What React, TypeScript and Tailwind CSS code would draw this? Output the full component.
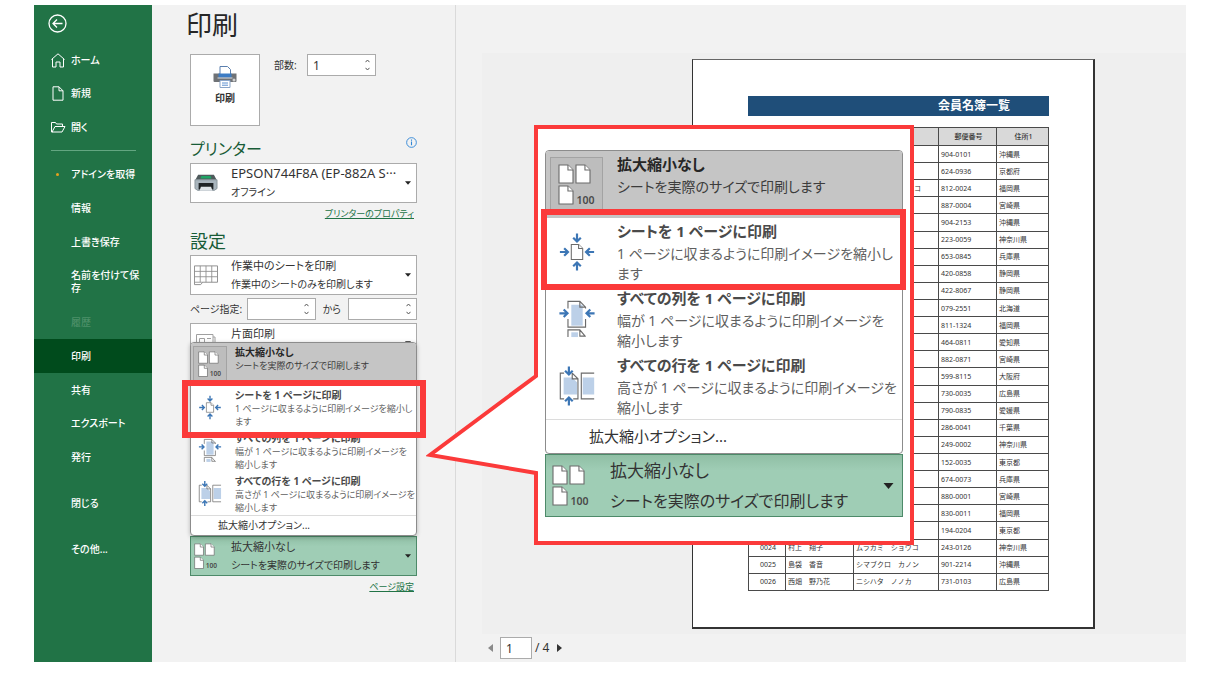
import type { ReactNode } from "react";

type Size = "sm" | "lg";

const RED = "#fb3a3a";

/* ---------- icons ---------- */

function Sheet({ x, y, w = 14, h = 18 }: { x: number; y: number; w?: number; h?: number }) {
  const f = w * 0.36;
  return (
    <g fill="#fff" stroke="#6b6b6b" strokeWidth="1.1">
      <path d={`M${x} ${y}h${w - f}l${f} ${f}v${h - f}h${-w}z`} />
      <path d={`M${x + w - f} ${y}v${f}h${f}`} />
    </g>
  );
}

function ArrowMark({ x, y, rotate = 0 }: { x: number; y: number; rotate?: number }) {
  return (
    <path
      d="M-5 0H3.500M-0.500 -4L3.500 0L-0.500 4"
      transform={`translate(${x} ${y}) rotate(${rotate})`}
      fill="none"
      stroke="#3c76b5"
      strokeWidth="2.3"
    />
  );
}

function NoScaleIcon({ className }: { className: string }) {
  return (
    <svg viewBox="0 0 38 42" className={className} aria-hidden="true">
      <Sheet x={1} y={1} />
      <Sheet x={18} y={1} />
      <Sheet x={1} y={22} />
      <text x="18.5" y="40" fontSize="10.5" fontWeight="600" fontFamily="Noto Sans, sans-serif" fill="#4a4a4a">
        100
      </text>
    </svg>
  );
}

function FitPageIcon({ className }: { className: string }) {
  return (
    <svg viewBox="-1 -1 40 42" className={className} aria-hidden="true">
      <Sheet x={13} y={12} w={12} h={16} />
      <ArrowMark x={6} y={20} />
      <ArrowMark x={32} y={20} rotate={180} />
      <ArrowMark x={19} y={5.5} rotate={90} />
      <ArrowMark x={19} y={34.5} rotate={-90} />
    </svg>
  );
}

function FitColumnsIcon({ className }: { className: string }) {
  return (
    <svg viewBox="0 -1 40 42" className={className} aria-hidden="true">
      <rect x="14" y="5" width="12" height="22" fill="#bcd0e8" />
      <path d="M10.500 9V1.500H23l6 6V9M10.500 20v8.500H29V20M23 1.500v6h6" fill="none" stroke="#6b6b6b" strokeWidth="1.200" />
      <path d="M14 34h7v5h-7z" fill="#bcd0e8" />
      <path d="M10.500 39v-7.500H23l6 7M23 31.500V38h6" fill="none" stroke="#6b6b6b" strokeWidth="1.200" />
      <ArrowMark x={6.5} y={14} />
      <ArrowMark x={33.500} y={14} rotate={180} />
    </svg>
  );
}

function FitRowsIcon({ className }: { className: string }) {
  return (
    <svg viewBox="0 0 38 44" className={className} aria-hidden="true">
      <path d="M5 13h9l5 5v13H5zM25 13h12v18H25z" fill="#bcd0e8" />
      <path d="M5.500 8.500H1.500v27h4M14 8.500l6 6v21h-5M14 8.500v6h6M37 8.500H23.500v27H37" fill="none" stroke="#6b6b6b" strokeWidth="1.200" />
      <ArrowMark x={10.500} y={6.500} rotate={90} />
      <ArrowMark x={10.500} y={37.500} rotate={-90} />
    </svg>
  );
}

function PrintIcon() {
  return (
    <svg viewBox="0 0 24 22" className="h-[22px] w-6" aria-hidden="true">
      <path d="M0.500 7.500h23v7.500a1 1 0 0 1-1 1h-21a1 1 0 0 1-1-1z" fill="#6f7276" />
      <path d="M7 0.500h7.500l3 3V10H7z" fill="#fff" stroke="#5a7fae" />
      <path d="M5.500 7.500h13v4h-13z" fill="#3d7cc4" />
      <path d="M4.500 11.500h15v1h-15z" fill="#d9dde2" />
      <circle cx="21" cy="14" r="1.500" fill="#d0d0d0" />
      <path d="M7 14.500h10v7H7z" fill="#fff" stroke="#8aa5c8" />
      <path d="M9 17h6M9 19.200h6" stroke="#5b8fd0" />
    </svg>
  );
}

function PrinterDeviceIcon() {
  return (
    <svg viewBox="0 0 26 20" className="h-5 w-6" aria-hidden="true">
      <path d="M4.500 1h17l3 5.500H1.500z" fill="#4f5a5c" />
      <path d="M8 2.500h10l1 2.500H7z" fill="#1fa565" />
      <path d="M1 6.500h24V16l-3 2H4l-3-2z" fill="#a9b5bd" stroke="#7d8990" strokeWidth="0.800" />
      <path d="M5 10h16v7H5z" fill="#1f2426" />
      <path d="M7.500 14h11l1.500 4.500H6z" fill="#dfe5e8" />
    </svg>
  );
}

function GridIcon() {
  return (
    <svg viewBox="0 0 25 21" className="h-[21px] w-6" aria-hidden="true" fill="none" stroke="#8d8d8d">
      <path d="M0.500 0.500h24v17H9l-2 2.500H0.500z" fill="#fff" />
      <path d="M0.500 6.200h24M0.500 11.800h24M6.500 0.500v17M12.500 0.500v17M18.500 0.500v17M0.500 17.500H9" strokeWidth="0.900" />
    </svg>
  );
}

function OneSideIcon() {
  return (
    <svg viewBox="0 0 22 22" className="h-[22px] w-[22px]" aria-hidden="true" fill="none" stroke="#a0a0a0">
      <path d="M2.500 20V2.500h16.500V20M19 5h2V20" />
      <path d="M5.500 6.500h5v4h-5zM13 6.500h4M13 10.500h4M5.500 14h11.500" />
    </svg>
  );
}

/* ---------- small building blocks ---------- */

function Spinner({ label, value = "", width }: { label: string; value?: string; width: string }) {
  return (
    <span className={`flex h-[22px] items-center border border-[#ababab] bg-white ${width}`}>
      <input aria-label={label} defaultValue={value} className="min-w-0 flex-1 bg-transparent pl-[5px] text-xs leading-none text-[#333] outline-none" />
      <span className="flex h-full w-4 flex-col items-center justify-between py-1">
        <button type="button" aria-label={`${label} +`} className="flex">
          <svg viewBox="0 0 5 4" className="h-1 w-[5px]" fill="none" stroke="#555"><path d="M0.500 3.200L2.500 1L4.500 3.200" /></svg>
        </button>
        <button type="button" aria-label={`${label} -`} className="flex">
          <svg viewBox="0 0 5 4" className="h-1 w-[5px]" fill="none" stroke="#555"><path d="M0.500 0.800L2.500 3L4.500 0.800" /></svg>
        </button>
      </span>
    </span>
  );
}

function DropBox({ label, title, detail, icon, size = "sm", active = false, titleSize = "text-[11px]" }: {
  label: string; title: string; detail: string; icon: ReactNode; size?: Size; active?: boolean; titleSize?: string;
}) {
  const lg = size === "lg";
  const tone = active
    ? "border-[#4d8a69] bg-linear-to-b from-[#90bfa5] to-[#9fcdb5] to-25%"
    : "border-[#ababab] bg-white";
  return (
    <div className={`flex items-center overflow-hidden border text-[#333] ${tone} ${lg ? "h-[63px]" : "h-10"}`}>
      <span className={lg ? "flex w-16 shrink-0 pl-1.5" : "flex w-10 shrink-0 pl-[3px]"}>{icon}</span>
      <span className={`flex min-w-0 flex-1 flex-col ${lg ? "leading-[30px]" : "leading-[19px]"}`}>
        <select aria-label={label} className={`w-full appearance-none bg-transparent p-0 outline-none ${lg ? "h-[30px] text-[17px]" : `h-[19px] ${titleSize}`}`}>
          <option>{title}</option>
        </select>
        <span className={`whitespace-nowrap ${lg ? "h-[30px] text-base leading-[30px]" : "h-[19px] text-[10px] leading-[19px]"}`}>{detail}</span>
      </span>
      <svg viewBox="0 0 10 6" className={lg ? "mr-2 h-1.5 w-[11px] shrink-0" : "mr-[5px] h-1 w-1.5 shrink-0"} aria-hidden="true">
        <path d="M0 0h10L5 6z" fill="#222" />
      </svg>
    </div>
  );
}

const choices = [
  { title: "拡大縮小なし", lines: ["シートを実際のサイズで印刷します"], Icon: NoScaleIcon },
  { title: "シートを 1 ページに印刷", lines: ["1 ページに収まるように印刷イメージを縮小し", "ます"], Icon: FitPageIcon },
  { title: "すべての列を 1 ページに印刷", lines: ["幅が 1 ページに収まるように印刷イメージを", "縮小します"], Icon: FitColumnsIcon },
  { title: "すべての行を 1 ページに印刷", lines: ["高さが 1 ページに収まるように印刷イメージを", "縮小します"], Icon: FitRowsIcon },
];

function ScaleMenu({ size }: { size: Size }) {
  const lg = size === "lg";
  const chosenFrame = lg ? "mt-1.5 h-14" : "mt-[3px] h-9";
  const plainFrame = lg ? "h-[67px]" : "h-[43px]";
  return (
    <div className={`rounded-[4px] border border-[#8c8c8c] bg-white ${lg ? "" : "shadow-[0_1px_4px_rgba(0,0,0,0.25)]"}`}>
      <ul role="listbox" aria-label="拡大縮小">
        {choices.map(({ title, lines, Icon }, i) => {
          const chosen = i === 0;
          return (
            <li key={title} role="option" aria-selected={chosen} className="relative">
              <button
                type="button"
                className={`flex w-full text-left ${plainFrame} ${chosen ? "rounded-t-[3px] bg-[#c5c5c5] text-[#262626]" : "text-[#555]"}`}
              >
                <span
                  className={`flex shrink-0 items-center justify-center ${lg ? "mr-3.5 ml-1 w-[53px]" : "mr-2 ml-0.5 w-[34px]"} ${
                    chosen ? `border border-[#a3a3a3] bg-[#bdbdbd] ${chosenFrame}` : plainFrame
                  }`}
                >
                  <Icon className={lg ? "h-[42px] w-[38px]" : "h-[27px] w-6"} />
                </span>
                <span className={`flex flex-col whitespace-nowrap pt-[3px] ${lg ? "gap-[3px] leading-5" : "leading-[13px]"}`}>
                  <strong className={`font-bold ${lg ? "text-[15px]" : "text-[10px]"} ${chosen ? "" : "text-[#4a4a4a]"}`}>{title}</strong>
                  <span className={`${lg ? "text-sm leading-5" : "text-[9px]"} ${chosen ? "text-[#3c3c3c]" : "text-[#5f5f5f]"}`}>
                    {lines.map((line) => (
                      <span key={line} className="block">{line}</span>
                    ))}
                  </span>
                </span>
              </button>
              {i === 1 && (
                <span
                  className={`pointer-events-none absolute z-10 border-6 border-[#fb3a3a] ${
                    lg ? "-top-[9px] -right-1 -bottom-[5px] -left-[5px]" : "-top-1.5 -right-2.5 -bottom-[9px] -left-[9px]"
                  }`}
                />
              )}
            </li>
          );
        })}
      </ul>
      <button
        type="button"
        className={`block w-full border-t border-[#dcdcdc] text-left text-[#333] ${lg ? "h-[34px] pl-[43px] text-[15px]" : "h-5 pl-[27px] text-[10px]"}`}
      >
        拡大縮小オプション...
      </button>
    </div>
  );
}

/* ---------- sidebar ---------- */

function NavItem({ label, icon, className = "h-[34px]", current = false }: {
  label: string; icon?: ReactNode; className?: string; current?: boolean;
}) {
  return (
    <a
      href="#"
      aria-current={current ? "page" : undefined}
      className={`flex items-center text-[10px] leading-[13px] font-medium ${className} ${current ? "bg-[#004b1c]" : ""}`}
    >
      <span className="flex w-[37px] shrink-0 items-center pl-[17px]">{icon}</span>
      <span className="w-[72px]">{label}</span>
    </a>
  );
}

function Sidebar() {
  return (
    <nav className="w-[118px] shrink-0 bg-[#217346] text-white">
      <button type="button" aria-label="戻る" className="mb-[9px] flex pt-[9px] pl-3.5">
        <svg viewBox="0 0 20 20" className="size-5" fill="none" stroke="#fff" strokeWidth="1.300">
          <circle cx="9.500" cy="9.500" r="8.500" />
          <path d="M14.500 9.500H5M9 5.500l-4 4l4 4" />
        </svg>
      </button>
      <NavItem label="ホーム" icon={
        <svg viewBox="0 0 14 15" className="h-[15px] w-3.5" fill="none" stroke="#fff"><path d="M0.500 6.500L7 0.800l6.500 5.700M1.500 5.700v8.300h3.500V9h4v5h3.500V5.700" /></svg>
      } />
      <NavItem label="新規" className="h-[33px]" icon={
        <svg viewBox="0 0 14 15" className="h-[15px] w-3.5" fill="none" stroke="#fff"><path d="M2 0.800h6l4 4v9.400H2zM8 0.800v4h4" /></svg>
      } />
      <NavItem label="開く" icon={
        <svg viewBox="0 0 15 12" className="h-3 w-[15px]" fill="none" stroke="#fff"><path d="M2 10.500L0.500 11V1.500h4l1 1.500h6v2.500M1 11L4 5.500h10L11 11z" /></svg>
      } />
      <hr className="my-1.5 mr-4 ml-[17px] border-[#63a681]" />
      <NavItem label="アドインを取得" icon={<span className="ml-[5px] size-[3px] rounded-full bg-[#e5a01d]" />} />
      <NavItem label="情報" />
      <NavItem label="上書き保存" />
      <NavItem label="名前を付けて保存" className="h-[46px]" />
      <NavItem label="履歴" className="h-[34px] text-[#4d9069]" />
      <NavItem label="印刷" current />
      <NavItem label="共有" />
      <NavItem label="エクスポート" className="h-[33px]" />
      <NavItem label="発行" />
      <NavItem label="閉じる" className="mt-3 h-[34px]" />
      <NavItem label="その他..." className="mt-3 h-[34px]" />
    </nav>
  );
}

/* ---------- print settings ---------- */

function Settings() {
  return (
    <section className="flex w-[304px] shrink-0 flex-col border-r border-[#dadada] pr-[38px] pl-[38px]">
      <h1 className="-ml-1 pt-0.5 text-[26px] leading-9 text-[#262626]">印刷</h1>
      <div className="mt-[11px] flex items-start">
        <button type="button" className="flex h-[72px] w-[70px] flex-col items-center gap-0.5 border border-[#ababab] bg-white pt-[11px] text-[10px] leading-4 font-bold text-[#333]">
          <PrintIcon />
          印刷
        </button>
        <label className="flex items-center pl-3.5 text-[10px] leading-[22px] text-[#333]">
          <span className="w-[33px]">部数:</span>
          <Spinner label="部数" value="1" width="w-[69px]" />
        </label>
      </div>
      <div className="mt-2.5 flex h-[27px] items-start justify-between">
        <h2 className="text-base leading-[27px] text-[#185c37]">プリンター</h2>
        <svg viewBox="0 0 12 12" className="mt-px size-[11px]" fill="none" stroke="#2f86d6" aria-hidden="true">
          <circle cx="6" cy="6" r="5.300" />
          <path d="M6 5v4M6 2.800v1.200" strokeWidth="1.200" />
        </svg>
      </div>
      <DropBox label="プリンター" title="EPSON744F8A (EP-882A S···" detail="オフライン" titleSize="text-[13px]" icon={<PrinterDeviceIcon />} />
      <a href="#" className="mt-0.5 mr-[3px] self-end text-[9px] leading-[18px] text-[#217346] underline">プリンターのプロパティ</a>
      <h2 className="mt-1.5 mb-0.5 text-lg leading-6 text-[#185c37]">設定</h2>
      <DropBox label="印刷対象" title="作業中のシートを印刷" detail="作業中のシートのみを印刷します" icon={<GridIcon />} />
      <div className="my-[3px] flex h-[22px] items-center justify-between text-[10px] whitespace-nowrap text-[#333]">
        <span>ページ指定:</span>
        <span className="flex items-center gap-[7px]">
          <Spinner label="開始ページ" width="w-[69px]" />
          から
          <Spinner label="終了ページ" width="w-[69px]" />
        </span>
      </div>
      <DropBox label="印刷面" title="片面印刷" detail="" icon={<OneSideIcon />} />
      <div className="relative mt-[173px]">
        <div className="absolute inset-x-0 bottom-full">
          <ScaleMenu size="sm" />
        </div>
        <DropBox active label="拡大縮小" title="拡大縮小なし" detail="シートを実際のサイズで印刷します" icon={<NoScaleIcon className="h-[27px] w-6" />} />
      </div>
      <a href="#" className="mt-0.5 mr-[3px] self-end text-[9px] leading-[18px] text-[#217346] underline">ページ設定</a>
    </section>
  );
}

/* ---------- preview ---------- */

type Row = { zip: string; pref: string; no?: string; name?: string; kana?: string };

const rows: Row[] = [
  { zip: "904-0101", pref: "沖縄県" },
  { zip: "624-0936", pref: "京都府" },
  { zip: "812-0024", pref: "福岡県", kana: "コ" },
  { zip: "887-0004", pref: "宮崎県" },
  { zip: "904-2153", pref: "沖縄県" },
  { zip: "223-0059", pref: "神奈川県" },
  { zip: "653-0845", pref: "兵庫県" },
  { zip: "420-0858", pref: "静岡県" },
  { zip: "422-8067", pref: "静岡県" },
  { zip: "079-2551", pref: "北海道" },
  { zip: "811-1324", pref: "福岡県" },
  { zip: "464-0811", pref: "愛知県" },
  { zip: "882-0871", pref: "宮崎県" },
  { zip: "599-8115", pref: "大阪府" },
  { zip: "730-0035", pref: "広島県" },
  { zip: "790-0835", pref: "愛媛県" },
  { zip: "286-0041", pref: "千葉県" },
  { zip: "249-0002", pref: "神奈川県" },
  { zip: "152-0035", pref: "東京都" },
  { zip: "674-0073", pref: "兵庫県" },
  { zip: "880-0001", pref: "宮崎県" },
  { zip: "830-0011", pref: "福岡県" },
  { zip: "194-0204", pref: "東京都" },
  { zip: "243-0126", pref: "神奈川県", no: "0024", name: "村上　翔子", kana: "ムラカミ　ショウコ" },
  { zip: "901-2214", pref: "沖縄県", no: "0025", name: "島袋　香音", kana: "シマブクロ　カノン" },
  { zip: "731-0103", pref: "広島県", no: "0026", name: "西畑　野乃花", kana: "ニシハタ　ノノカ" },
];

const cell = "border border-[#4a4a4a] p-0 pl-0.5";

function Preview() {
  return (
    <section className="flex min-w-0 flex-1 flex-col pt-12 pl-[26px]">
      <div className="bg-[#efefef] pt-1.5 pb-[5px] pl-[210px]">
        <div className="h-[570px] w-[403px] border border-r-2 border-b-2 border-[#333] border-t-[#666] bg-white pt-9 pr-[44px] pl-[55px]">
          <h2 className="flex h-5 items-center justify-end bg-[#1f4e79] pr-[39px] text-xs leading-none font-bold text-white">会員名簿一覧</h2>
          <table className="mt-[11px] h-[464px] w-full table-fixed border-collapse text-[7px] leading-none text-[#333] [font-feature-settings:normal]">
            <colgroup>
              <col className="w-[37px]" />
              <col className="w-[68px]" />
              <col className="w-[85px]" />
              <col className="w-[58px]" />
              <col />
            </colgroup>
            <thead>
              <tr className="h-[18px] bg-[#d9d9d9]">
                <th className={cell} />
                <th className={cell} />
                <th className={cell} />
                <th className={`${cell} font-medium`}>郵便番号</th>
                <th className={`${cell} font-medium`}>住所1</th>
              </tr>
            </thead>
            <tbody>
              {rows.map((r) => (
                <tr key={r.zip}>
                  <td className={`${cell} text-center`}>{r.no}</td>
                  <td className={cell}>{r.name}</td>
                  <td className={`${cell} ${r.no ? "" : "pr-[17px] text-right"}`}>{r.kana}</td>
                  <td className={cell}>{r.zip}</td>
                  <td className={cell}>{r.pref}</td>
                </tr>
              ))}
            </tbody>
          </table>
        </div>
      </div>
      <div className="mt-[3px] flex items-center pl-1.5 text-xs text-[#333]">
        <button type="button" aria-label="前のページ">
          <svg viewBox="0 0 5 8" className="h-2 w-[5px]"><path d="M5 0v8L0 4z" fill="#8a8a8a" /></svg>
        </button>
        <input aria-label="ページ番号" defaultValue="1" className="ml-[7px] h-[22px] w-8 border border-[#ababab] bg-white pl-[5px] outline-none" />
        <span className="w-[25px] pl-[3px]">/ 4</span>
        <button type="button" aria-label="次のページ">
          <svg viewBox="0 0 5 8" className="h-2 w-[5px]"><path d="M0 0v8l5-4z" fill="#333" /></svg>
        </button>
      </div>
    </section>
  );
}

/* ---------- enlarged view of the menu ---------- */

function Callout() {
  return (
    <aside className="absolute top-[120px] left-[500px] z-20 w-[380px] border-4 border-[#fb3a3a] bg-white px-[7px] pt-[21px] pb-6">
      <svg viewBox="0 0 114 108" className="absolute top-[240px] -left-[112px] h-[108px] w-[114px]" aria-hidden="true">
        <path d="M114 5L110 7L4 86L110 103H114z" fill="#fff" />
        <path d="M110 0V7L4 86L110 104V108" fill="none" stroke={RED} strokeWidth="4" />
      </svg>
      <ScaleMenu size="lg" />
      <DropBox active size="lg" label="拡大縮小の設定" title="拡大縮小なし" detail="シートを実際のサイズで印刷します" icon={<NoScaleIcon className="h-[42px] w-[38px]" />} />
    </aside>
  );
}

export default function App() {
  return (
    <div className="flex min-h-screen bg-white pt-[5px] pr-9 pb-[17px] pl-[34px] font-['Noto_Sans','Noto_Sans_CJK_JP',sans-serif] [font-feature-settings:'palt']">
      <main className="relative flex min-w-0 flex-1 bg-[#f2f2f2]">
        <Sidebar />
        <Settings />
        <Preview />
        <Callout />
      </main>
    </div>
  );
}
